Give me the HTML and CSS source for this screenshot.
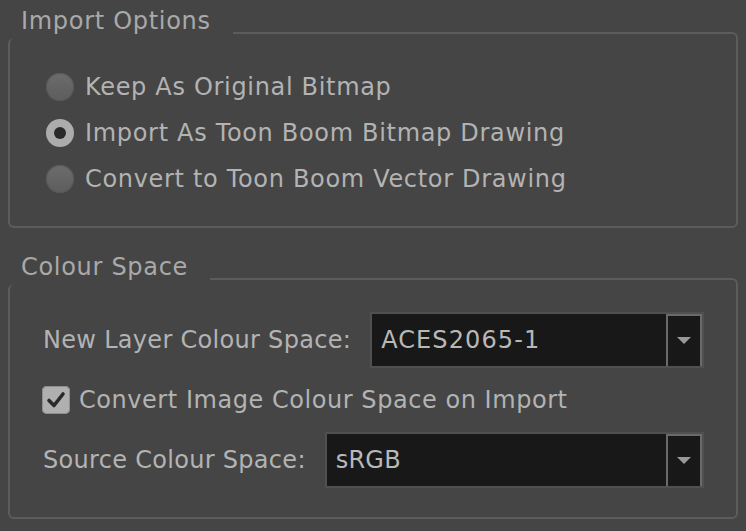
FILE: index.html
```html
<!DOCTYPE html>
<html>
<head>
<meta charset="utf-8">
<link rel="stylesheet" href="styles.css">
</head>
<body>
<div class="page">
  <section class="group">
    <div class="group-title">Import Options</div>
    <div class="group-cap"></div>
    <div class="group-body radios">
      <label class="radio-row"><span class="radio"></span><span class="label">Keep As Original Bitmap</span></label>
      <label class="radio-row"><span class="radio checked"></span><span class="label">Import As Toon Boom Bitmap Drawing</span></label>
      <label class="radio-row"><span class="radio"></span><span class="label">Convert to Toon Boom Vector Drawing</span></label>
    </div>
  </section>
  <section class="group group-colour">
    <div class="group-title">Colour Space</div>
    <div class="group-cap"></div>
    <div class="group-body form">
      <div class="field-row">
        <span class="label field-label">New Layer Colour Space:</span>
        <div class="select">
          <span class="select-value wide">ACES2065-1</span>
          <span class="select-button"><span class="arrow"></span></span>
        </div>
      </div>
      <label class="check-row">
        <span class="checkbox"><svg width="20" height="18" viewBox="0 0 20 18"><path d="M3 9.5 L8 14.5 L17 3" fill="none" stroke="#2a2a2a" stroke-width="3.6" stroke-linecap="round" stroke-linejoin="round"/></svg></span>
        <span class="label">Convert Image Colour Space on Import</span>
      </label>
      <div class="field-row">
        <span class="label field-label">Source Colour Space:</span>
        <div class="select">
          <span class="select-value">sRGB</span>
          <span class="select-button"><span class="arrow"></span></span>
        </div>
      </div>
    </div>
  </section>
</div>
</body>
</html>
```

FILE: styles.css
```css
html, body {
  margin: 0;
  padding: 0;
  background: #454545;
}
body {
  width: 746px;
  height: 531px;
  overflow: hidden;
  font-family: "DejaVu Sans", "Noto Sans", sans-serif;
  font-size: 24px;
  letter-spacing: 0.55px;
  color: #b3b3b3;
}
.page {
  padding: 0 8px;
}
.group {
  display: grid;
  grid-template-columns: auto 1fr;
}
.group-colour {
  margin-top: 18px;
}
.group-title {
  padding: 4px 22px 0 13px;
  line-height: 34px;
  color: #a9a9a9;
  letter-spacing: 0.7px;
  white-space: nowrap;
}
.group-cap {
  align-self: end;
  height: 4px;
  border-top: 2px solid #5c5c5c;
  border-right: 2px solid #5c5c5c;
  border-top-right-radius: 6px;
}
.group-body {
  grid-column: 1 / -1;
  border: 2px solid #5c5c5c;
  border-top: none;
  border-radius: 6px 0 6px 6px;
}
.radios {
  padding: 26px 20px 24px 36px;
  display: flex;
  flex-direction: column;
}
.radio-row {
  display: flex;
  align-items: center;
  height: 46px;
  gap: 11px;
}
.radio-row .label {
  letter-spacing: 0.68px;
}
.label {
  line-height: 46px;
  white-space: nowrap;
}
.field-label {
  letter-spacing: 0.3px;
}
.radio {
  width: 28px;
  height: 28px;
  border-radius: 50%;
  box-sizing: border-box;
  background: linear-gradient(#6c6c6c, #5d5d5d);
  box-shadow: inset 0 0 0 1px #585858;
  flex: none;
  display: flex;
  align-items: center;
  justify-content: center;
}
.radio.checked {
  background: #acacac;
  box-shadow: none;
}
.radio.checked::after {
  content: "";
  width: 12px;
  height: 12px;
  border-radius: 50%;
  background: #2a2a2a;
}
.form {
  padding: 28px 32px 29px 32px;
  display: flex;
  flex-direction: column;
  gap: 18px;
}
.field-row {
  display: flex;
  align-items: center;
  gap: 19px;
  padding-left: 1px;
}
.select {
  flex: 1;
  height: 56px;
  box-sizing: border-box;
  border: 2px solid #505050;
  background: #181818;
  display: flex;
  align-items: stretch;
}
.select-value {
  flex: 1;
  padding-left: 9px;
  line-height: 52px;
  color: #b8b8b8;
  letter-spacing: 0.2px;
}
.select-value.wide {
  letter-spacing: 1.1px;
}
.select-button {
  width: 36px;
  flex: none;
  border: 2px solid #6a6a6a;
  border-bottom: none;
  box-sizing: border-box;
  display: flex;
  align-items: center;
  justify-content: center;
}
.arrow {
  width: 0;
  height: 0;
  border-left: 7px solid transparent;
  border-right: 7px solid transparent;
  border-top: 7px solid #999999;
  margin-top: -2px;
}
.check-row {
  display: flex;
  align-items: center;
  gap: 9px;
  height: 28px;
}
.check-row .label {
  line-height: 28px;
}
.checkbox {
  width: 28px;
  height: 28px;
  box-sizing: border-box;
  border-radius: 5px;
  background: #b0b0b0;
  box-shadow: inset 0 0 0 1px #8e8e8e;
  display: flex;
  align-items: center;
  justify-content: center;
  flex: none;
}
```
